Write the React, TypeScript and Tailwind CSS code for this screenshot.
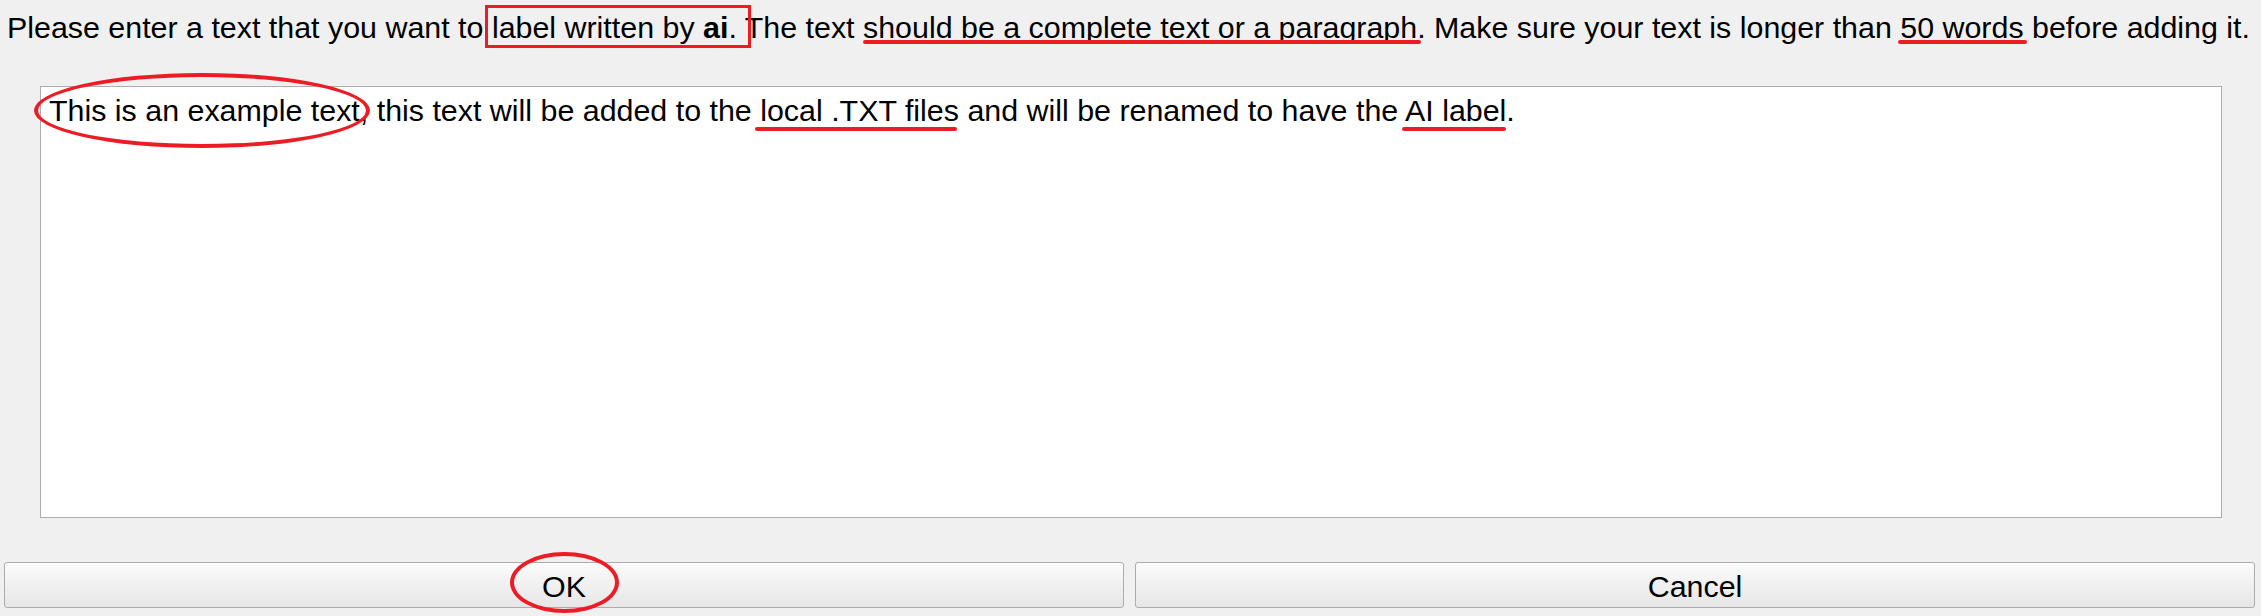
import type { ReactNode } from "react";

const RED = "bg-[#ed1c24]";

function Underline({ children, className }: { children: ReactNode; className: string }) {
  return (
    <span className="relative">
      {children}
      <span className={`absolute h-[4px] rounded-full ${RED} ${className}`} />
    </span>
  );
}

function Ring({ children, className }: { children: ReactNode; className: string }) {
  return (
    <span className="relative">
      {children}
      <span className={`pointer-events-none absolute rounded-[50%] border-[4px] border-[#ed1c24] ${className}`} />
    </span>
  );
}

function PushButton({ children }: { children: ReactNode }) {
  return (
    <button className="flex h-[46px] flex-1 items-center justify-center rounded-[3px] border border-[#acacac] bg-linear-to-b from-[#fbfbfb] to-[#e6e6e6] pt-[2px] text-black leading-[36px]">
      {children}
    </button>
  );
}

export default function App() {
  return (
    <div className="flex h-[616px] w-[2261px] flex-col overflow-hidden bg-[#f0f0f0] font-['Liberation_Sans',Arial,sans-serif] text-[30.4px] leading-[36px] text-black">
      <div className="whitespace-nowrap pl-[7px] pt-[9px]">
        Please enter a text that you want to{" "}
        <span className="relative">
          label written by <b>ai</b>.
          <span className="absolute -bottom-[4px] -left-[7px] -right-[14px] -top-[5px] border-[3px] border-[#ed1c24]" />
        </span>{" "}
        The text{" "}
        <Underline className="-right-[4px] bottom-0 left-0">should be a complete text or a paragraph</Underline>. Make sure
        your text is longer than{" "}
        <Underline className="-left-[2px] -right-[3px] bottom-0">50 words</Underline> before adding it.
      </div>

      <div className="ml-[40px] mt-[41px] h-[432px] w-[2182px] border border-[#adadad] bg-white pl-[8px] pt-[5px] whitespace-nowrap">
        <Ring className="-bottom-[21px] -left-[15px] -right-[2px] -top-[20px]">This is an example text,</Ring> this text
        will be added to the{" "}
        <Underline className="-bottom-[4px] -left-[5px] right-[2px]">local .TXT files</Underline> and will be renamed to
        have the <Underline className="-bottom-[4px] -left-[3px] right-[0px]">AI label</Underline>.
      </div>

      <div className="mt-[44px] flex gap-[11px] pl-[4px] pr-[6px]">
        <PushButton>
          <Ring className="-bottom-[9px] -left-[32px] -right-[33px] -top-[16px]">OK</Ring>
        </PushButton>
        <PushButton>Cancel</PushButton>
      </div>
    </div>
  );
}
